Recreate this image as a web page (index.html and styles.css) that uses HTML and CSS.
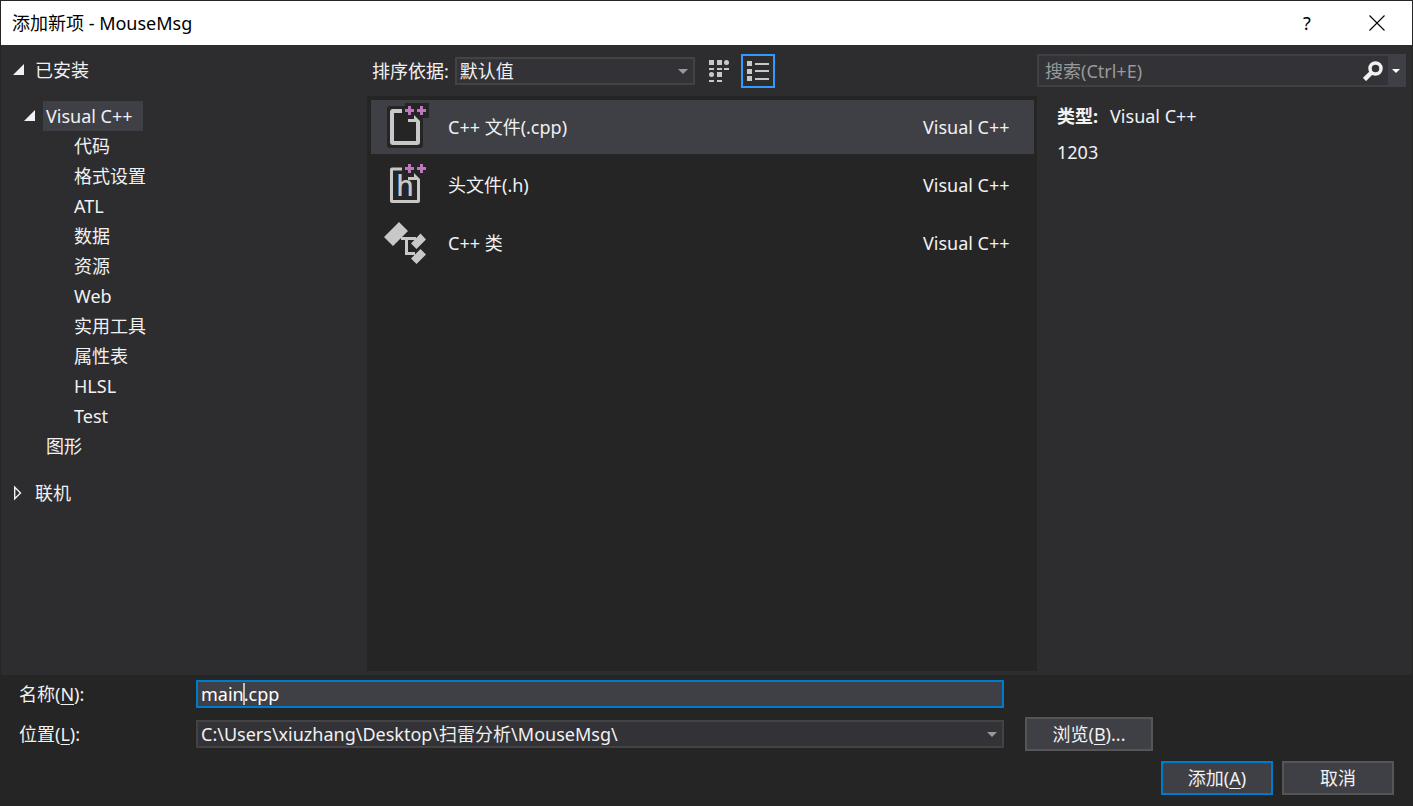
FILE: index.html
```html
<!DOCTYPE html>
<html lang="zh-CN">
<head>
<meta charset="utf-8">
<meta name="viewport" content="width=device-width, initial-scale=1">
<title>添加新项 - MouseMsg</title>
<link rel="stylesheet" href="styles.css">
</head>
<body>
<div class="dialog">
  <header class="titlebar">
    <h1 class="title">添加新项 - MouseMsg</h1>
    <button class="title-button" type="button" aria-label="帮助">?</button>
    <button class="title-button" type="button" aria-label="关闭">
      <svg width="16" height="16" viewBox="0 0 16 16"><path d="M.5.5l15 15M15.5.5l-15 15" fill="none" stroke="#000" stroke-width="1.1"/></svg>
    </button>
  </header>

  <main class="content">
    <nav class="sidebar">
      <div class="row root">
        <button class="toggle" type="button" aria-label="折叠"><svg width="12" height="12" viewBox="0 0 12 12"><path d="M11 0v11H0z" fill="#f1f1f1"/></svg></button>
        <button class="node" type="button">已安装</button>
      </div>
      <ul class="tree">
        <li>
          <div class="row">
            <button class="toggle" type="button" aria-label="折叠"><svg width="12" height="12" viewBox="0 0 12 12"><path d="M11 0v11H0z" fill="#f1f1f1"/></svg></button>
            <button class="node selected" type="button">Visual C++</button>
          </div>
          <ul class="subtree">
            <li class="row"><button class="node" type="button">代码</button></li>
            <li class="row"><button class="node" type="button">格式设置</button></li>
            <li class="row"><button class="node" type="button">ATL</button></li>
            <li class="row"><button class="node" type="button">数据</button></li>
            <li class="row"><button class="node" type="button">资源</button></li>
            <li class="row"><button class="node" type="button">Web</button></li>
            <li class="row"><button class="node" type="button">实用工具</button></li>
            <li class="row"><button class="node" type="button">属性表</button></li>
            <li class="row"><button class="node" type="button">HLSL</button></li>
            <li class="row"><button class="node" type="button">Test</button></li>
          </ul>
        </li>
        <li class="row leaf"><button class="node" type="button">图形</button></li>
      </ul>
      <div class="row root">
        <button class="toggle" type="button" aria-label="展开"><svg width="12" height="16" viewBox="0 0 12 16"><path d="M1.7 2.2v11.6L7.5 8z" fill="none" stroke="#f1f1f1" stroke-width="1.4"/></svg></button>
        <button class="node" type="button">联机</button>
      </div>
    </nav>

    <section class="templates">
      <div class="toolbar">
        <label for="sort">排序依据:</label>
        <div class="combo sort">
          <select id="sort"><option>默认值</option></select>
        </div>
        <button class="view" type="button" aria-label="小图标">
          <svg width="22" height="24" viewBox="0 0 22 24" fill="#c8c8c8">
            <path d="M0 1h5v5H0zM8 1h5v5H8zM8 13h5v5H8zM0 9h5v2H0zM8 9h5v2H8zM15 9h5v2h-5zM0 21h5v2H0zM8 21h5v2H8z"/>
            <circle cx="17.5" cy="3.5" r="2.5"/><circle cx="2.5" cy="15.5" r="2.5"/>
          </svg>
        </button>
        <button class="view active" type="button" aria-label="列表">
          <svg width="22" height="22" viewBox="0 0 22 22" fill="#c8c8c8">
            <path d="M0 1h5v5H0zM0 9h5v5H0zM0 16h5v5H0zM8 3h14v2H8zM8 10h14v2H8zM8 18h14v2H8z"/>
          </svg>
        </button>
      </div>
      <ul class="list">
        <li>
          <button class="item chosen" type="button">
            <svg class="icon" width="50" height="54" viewBox="0 0 50 54">
              <rect x="6" y="6" width="36" height="42" rx="3" fill="#252526"/>
              <path d="M24 3h24v15H24z" fill="#252526"/>
              <path d="M21 11H12q-1 0-1 1v30q0 1 1 1h24q1 0 1-1V21" fill="none" stroke="#c8c8c8" stroke-width="4"/>
              <path d="M27 19h6v-4l6 6v3h-4v-2h-8z" fill="#c8c8c8"/>
              <path d="M27 6h3v3h3v3h-3v3h-3v-3h-3V9h3zM39 6h3v3h3v3h-3v3h-3v-3h-3V9h3z" fill="#bb78bb"/>
            </svg>
            <span class="item-name">C++ 文件(.cpp)</span><span class="item-type">Visual C++</span>
          </button>
        </li>
        <li>
          <button class="item" type="button">
            <svg class="icon" width="50" height="54" viewBox="0 0 50 54">
              <path d="M21 11H11q-.5 0-.5.5V43q0 .5.5.5h26q.5 0 .5-.5V21" fill="none" stroke="#c8c8c8" stroke-width="3"/>
              <path d="M27 19h6v-4l6 6v2h-3v-1h-9z" fill="#c8c8c8"/>
              <path d="M27 6h3v3h3v3h-3v3h-3v-3h-3V9h3zM39 6h3v3h3v3h-3v3h-3v-3h-3V9h3z" fill="#bb78bb"/>
              <text class="glyph" x="24" y="38" text-anchor="middle">h</text>
            </svg>
            <span class="item-name">头文件(.h)</span><span class="item-type">Visual C++</span>
          </button>
        </li>
        <li>
          <button class="item" type="button">
            <svg class="icon" width="50" height="54" viewBox="0 0 50 54" fill="#c8c8c8">
              <path d="M18 6l9 9-15 15-9-9zM39.5 17.5l5.5 6-9.5 9.5-5.5-5.5zM39.5 33l5.5 5.5-9.5 9.5-5.5-5.5z"/>
              <path d="M20 22.5h15M25.5 22.5v15H34" fill="none" stroke="#c8c8c8" stroke-width="3"/>
            </svg>
            <span class="item-name">C++ 类</span><span class="item-type">Visual C++</span>
          </button>
        </li>
      </ul>
    </section>

    <aside class="details">
      <div class="search">
        <input class="search-input" type="text" placeholder="搜索(Ctrl+E)" aria-label="搜索">
        <button class="search-button" type="button" aria-label="搜索">
          <svg width="20" height="20" viewBox="0 0 20 20" fill="none" stroke="#f1f1f1"><circle cx="12.5" cy="7.5" r="5.5" stroke-width="3.5"/><path d="M8.500 11.500l-7 7" stroke-width="4.5"/></svg>
        </button>
        <button class="search-menu" type="button" aria-label="搜索选项">
          <svg width="8" height="4" viewBox="0 0 8 4"><path d="M0 0h8L4 4z" fill="#fff"/></svg>
        </button>
      </div>
      <dl class="info"><dt>类型:</dt><dd>Visual C++</dd></dl>
      <p class="description">1203</p>
    </aside>
  </main>

  <footer class="footer">
    <div class="fields">
      <label for="name">名称(<u>N</u>):</label>
      <div class="name-box"><input id="name" type="text" value="main.cpp"><span class="caret"></span></div>
    </div>
    <div class="fields location">
      <label for="location">位置(<u>L</u>):</label>
      <div class="combo">
        <select id="location"><option>C:\Users\xiuzhang\Desktop\扫雷分析\MouseMsg\</option></select>
      </div>
      <button class="button" type="button">浏览(<u>B</u>)...</button>
    </div>
    <div class="actions">
      <button class="button primary" type="button">添加(<u>A</u>)</button>
      <button class="button" type="button">取消</button>
    </div>
  </footer>
</div>
</body>
</html>
```

FILE: styles.css
```css
* { box-sizing: border-box; }

body {
  margin: 0;
  background: #2d2d30;
  color: #f1f1f1;
  font: 18px/24px "Noto Sans", "Noto Sans CJK SC", sans-serif;
}

button, input, select {
  margin: 0;
  padding: 0;
  border: 0;
  border-radius: 0;
  background: none;
  color: inherit;
  font: inherit;
  outline: 0;
}

ul, dl, p, h1 { margin: 0; padding: 0; list-style: none; }
svg { display: block; flex: none; }
u { text-underline-offset: 3px; text-decoration-thickness: 1px; }

.dialog {
  display: flex;
  flex-direction: column;
  min-height: 100vh;
  border: 1px solid #252526;
}

.titlebar {
  display: flex;
  align-items: center;
  height: 44px;
  padding-left: 11px;
  background: #fff;
  color: #000;
}
.title { flex: 1; font-size: 18px; font-weight: 400; }
.title-button {
  display: flex;
  align-items: center;
  justify-content: center;
  width: 70px;
  height: 44px;
}

.content {
  flex: 1;
  display: grid;
  grid-template-columns: 366px minmax(0, 1fr) 375px;
  background: #2d2d30;
}

/* Category tree */
.sidebar { padding: 10px 12px; }
.row { display: flex; align-items: center; height: 30px; }
.toggle { width: 19px; flex: none; }
.node { height: 30px; padding: 0 3px; text-align: left; white-space: nowrap; }
.selected { min-width: 100px; background: #3f3f46; }
.tree { margin: 16px 0 17px 11px; }
.leaf { padding-left: 19px; }
.subtree { padding-left: 47px; }

/* Template list */
.templates { display: flex; flex-direction: column; padding-bottom: 4px; }
.toolbar {
  display: flex;
  align-items: center;
  height: 51px;
  padding-left: 5px;
}
.combo { position: relative; height: 28px; }
.combo select {
  display: block;
  width: 100%;
  height: 28px;
  padding: 0 24px 0 3px;
  border: 2px solid #434346;
  background: #333337;
  appearance: none;
}
.combo::after {
  content: "";
  position: absolute;
  top: 12px;
  right: 7px;
  border: 5px solid transparent;
  border-top-color: #999;
  border-bottom: 0;
  pointer-events: none;
}
.sort { width: 240px; margin-left: 6px; }
.view {
  display: flex;
  align-items: center;
  justify-content: center;
  width: 34px;
  height: 34px;
  border: 2px solid transparent;
}
.sort + .view { margin: 0 4px 0 8px; }
.active { border-color: #39f; }
.list {
  flex: 1;
  display: flex;
  flex-direction: column;
  gap: 4px;
  padding: 4px 3px 4px 4px;
  background: #252526;
}
.item {
  display: flex;
  align-items: center;
  width: 100%;
  height: 54px;
  padding: 0 18px 0 10px;
  text-align: left;
}
.chosen { background: #3f3f46; }
.item-name { flex: 1; padding-left: 17px; }
.item-type { min-width: 93px; }
.glyph { fill: #c8c8c8; font-size: 28px; font-weight: 500; }

/* Search and description */
.details { padding: 9px 6px 0 0; }
.search {
  display: flex;
  height: 33px;
  border: 2px solid #3f3f46;
  background: #333337;
}
.search-input { flex: 1; min-width: 0; padding-left: 6px; }
.search-input::placeholder { color: #999; opacity: 1; }
.search-button { width: 25px; }
.search-menu {
  display: flex;
  align-items: center;
  justify-content: center;
  width: 16px;
  background: #3f3f46;
}
.info { display: flex; gap: 12px; margin: 17px 0 12px 20px; }
.info dt { font-weight: 700; }
.info dd { margin: 0; }
.description { margin-left: 20px; }

/* Name, location and dialog actions */
.footer { padding: 5px 18px 10px; background: #252526; }
.fields {
  display: grid;
  grid-template-columns: 177px minmax(0, 1fr) 128px;
  column-gap: 0;
  align-items: center;
  padding-right: 241px;
}
.name-box, .combo { margin-right: 0; }
.fields > div { margin-right: 21px; }
.location { margin-top: 9px; }
.name-box { position: relative; }
.name-box input {
  display: block;
  width: 100%;
  height: 28px;
  padding: 0 3px;
  border: 2px solid #007acc;
  background: #3f3f46;
  color: #fff;
}
.caret {
  position: absolute;
  top: 3px;
  left: 47px;
  width: 2px;
  height: 22px;
  background: #c0c0b9;
}
.button {
  height: 34px;
  border: 2px solid #555;
  background: #3f3f46;
}
.actions { display: flex; justify-content: flex-end; gap: 9px; margin-top: 10px; }
.actions .button { width: 112px; }
.actions .primary { border-color: #007acc; }
```
